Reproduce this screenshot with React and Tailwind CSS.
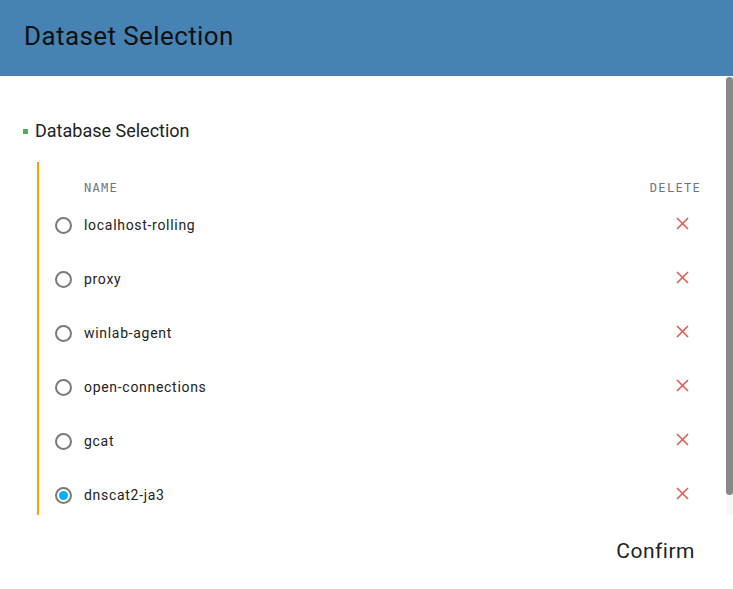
import React, { useState } from "react";

const datasets = [
  "localhost-rolling",
  "proxy",
  "winlab-agent",
  "open-connections",
  "gcat",
  "dnscat2-ja3",
];

const DeleteIcon = () => (
  <svg width="13" height="13" viewBox="0 0 13 13" fill="none" stroke="#dd5a52" strokeWidth="1.6">
    <line x1="1" y1="1" x2="12" y2="12" />
    <line x1="12" y1="1" x2="1" y2="12" />
  </svg>
);

const Radio = ({ checked }) => (
  <span className="flex h-[17px] w-[17px] shrink-0 items-center justify-center rounded-full border-2 border-[#7a7a7a]">
    {checked && <span className="h-[9px] w-[9px] rounded-full bg-[#00b0ff]" />}
  </span>
);

export default function App() {
  const [selected, setSelected] = useState("dnscat2-ja3");

  return (
    <div className="flex h-[589px] w-[733px] flex-col overflow-hidden bg-white font-['Roboto',sans-serif] text-[#222]">
      <div className="flex h-[76px] shrink-0 items-center bg-[#4682b4] px-[24px] pb-[3px]">
        <h1 className="text-[26px] tracking-[0.4px] text-[#111]">Dataset Selection</h1>
      </div>

      <div className="flex h-[439px] shrink-0">
        <div className="flex-1 overflow-hidden">
          <div className="flex items-center pl-[23px] pt-[44px]">
            <span className="mr-[7px] h-[5px] w-[5px] bg-[#4caf50]" />
            <h2 className="text-[18px] leading-[22px]">Database Selection</h2>
          </div>

          <div className="ml-[37px] mt-[20px] mb-[22px] border-l-2 border-[#f5a300] pl-[16px] pt-[16px]">
            <div className="flex h-[20px] items-center pl-[29px] font-['DejaVu_Sans_Mono',monospace] text-[12px] tracking-[1.3px] text-[#6b7685]">
              <span className="flex-1">NAME</span>
              <span className="mr-[25px]">DELETE</span>
            </div>
            {datasets.map((name) => (
              <div
                key={name}
                className="flex h-[54px] cursor-pointer items-center"
                onClick={() => setSelected(name)}
              >
                <Radio checked={selected === name} />
                <span className="ml-[12px] flex-1 text-[14px] tracking-[0.7px]">{name}</span>
                <span className="mr-[37px] mb-[4px]">
                  <DeleteIcon />
                </span>
              </div>
            ))}
          </div>
        </div>
        <div className="w-[7px] shrink-0 bg-[#f7f7f7] pt-[1px]">
          <div className="h-[418px] rounded-[4px] bg-[#888]" />
        </div>
      </div>

      <div className="flex flex-1 items-center justify-end pr-[38px]">
        <button className="text-[21px] tracking-[0.5px] text-[#222]">Confirm</button>
      </div>
    </div>
  );
}
